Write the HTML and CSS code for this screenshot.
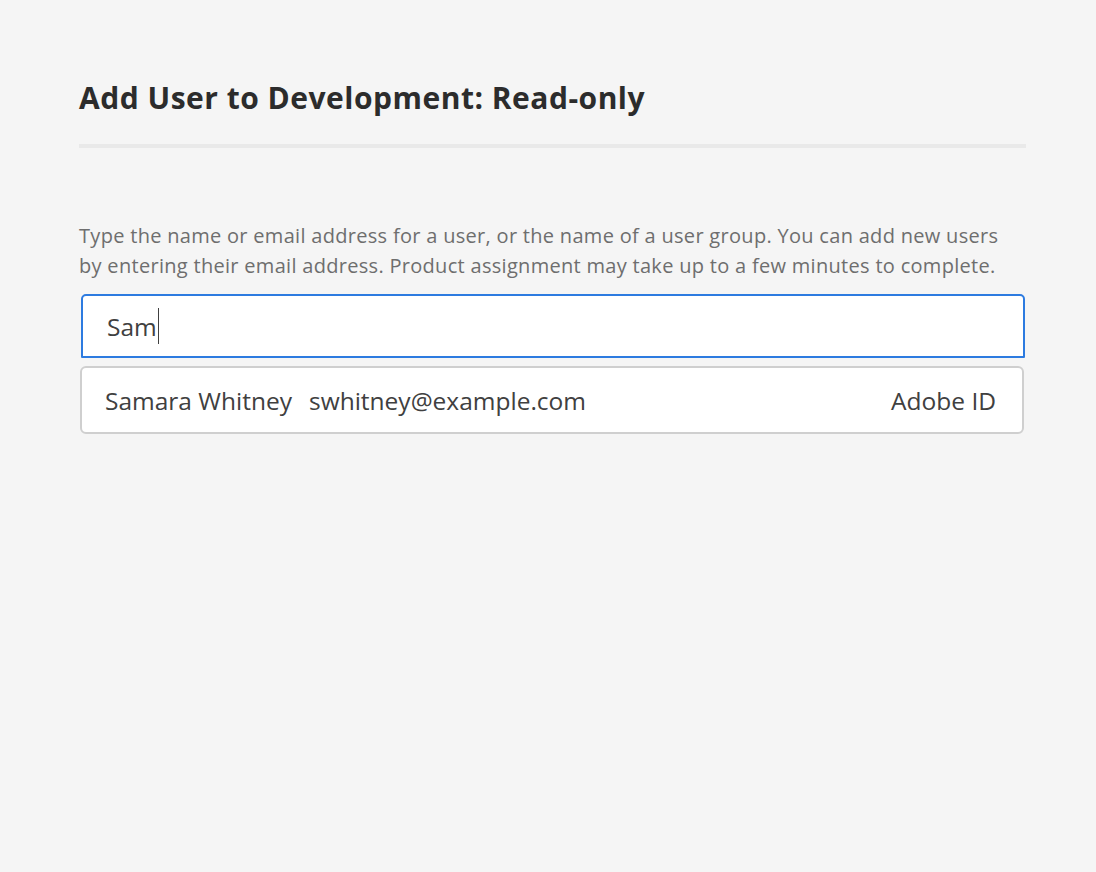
FILE: index.html
```html
<!DOCTYPE html>
<html lang="en">
<head>
<meta charset="utf-8">
<title>Add User</title>
<link rel="stylesheet" href="styles.css">
</head>
<body>
<main class="dialog">
  <h1 class="title">Add User to Development: Read-only</h1>
  <div class="divider"></div>
  <p class="desc">Type the name or email address for a user, or the name of a user group. You can add new users by entering their email address. Product assignment may take up to a few minutes to complete.</p>
  <div class="input"><span class="typed">Sam</span><span class="caret"></span></div>
  <div class="suggestion">
    <span class="name">Samara Whitney</span>
    <span class="email">swhitney@example.com</span>
    <span class="type">Adobe ID</span>
  </div>
</main>
</body>
</html>
```
FILE: styles.css
```css
html, body {
  margin: 0;
  padding: 0;
  background: #f5f5f5;
}
body {
  font-family: "Open Sans", "Liberation Sans", sans-serif;
  color: #2c2c2c;
}
.dialog {
  padding: 76px 70px 0 79px;
  display: flex;
  flex-direction: column;
}
.title {
  margin: 0;
  font-size: 30px;
  line-height: 44px;
  font-weight: 700;
  color: #2c2c2c;
  letter-spacing: 0.5px;
}
.divider {
  margin-top: 24px;
  height: 4px;
  background: #e9e9e9;
}
.desc {
  margin: 73px 0 0 0;
  font-size: 20px;
  line-height: 30px;
  letter-spacing: 0.3px;
  color: #6e6e6e;
  max-width: 930px;
}
.input {
  margin: 13px 1px 0 2px;
  height: 60px;
  border: 2px solid #2d7be0;
  border-radius: 5px 5px 1px 1px;
  background: #fff;
  display: flex;
  align-items: center;
  padding-left: 24px;
  font-size: 24.5px;
  color: #404040;
}
.caret {
  display: inline-block;
  width: 1.5px;
  height: 36px;
  background: #404040;
  margin-left: 1px;
}
.suggestion {
  margin: 8px 2px 0 1px;
  height: 64px;
  border: 2px solid #cfcfcf;
  border-radius: 6px;
  background: #fff;
  display: flex;
  align-items: center;
  padding: 0 26px 0 23px;
  font-size: 24.5px;
  color: #404040;
}
.email {
  margin-left: 17px;
}
.type {
  margin-left: auto;
}
```
